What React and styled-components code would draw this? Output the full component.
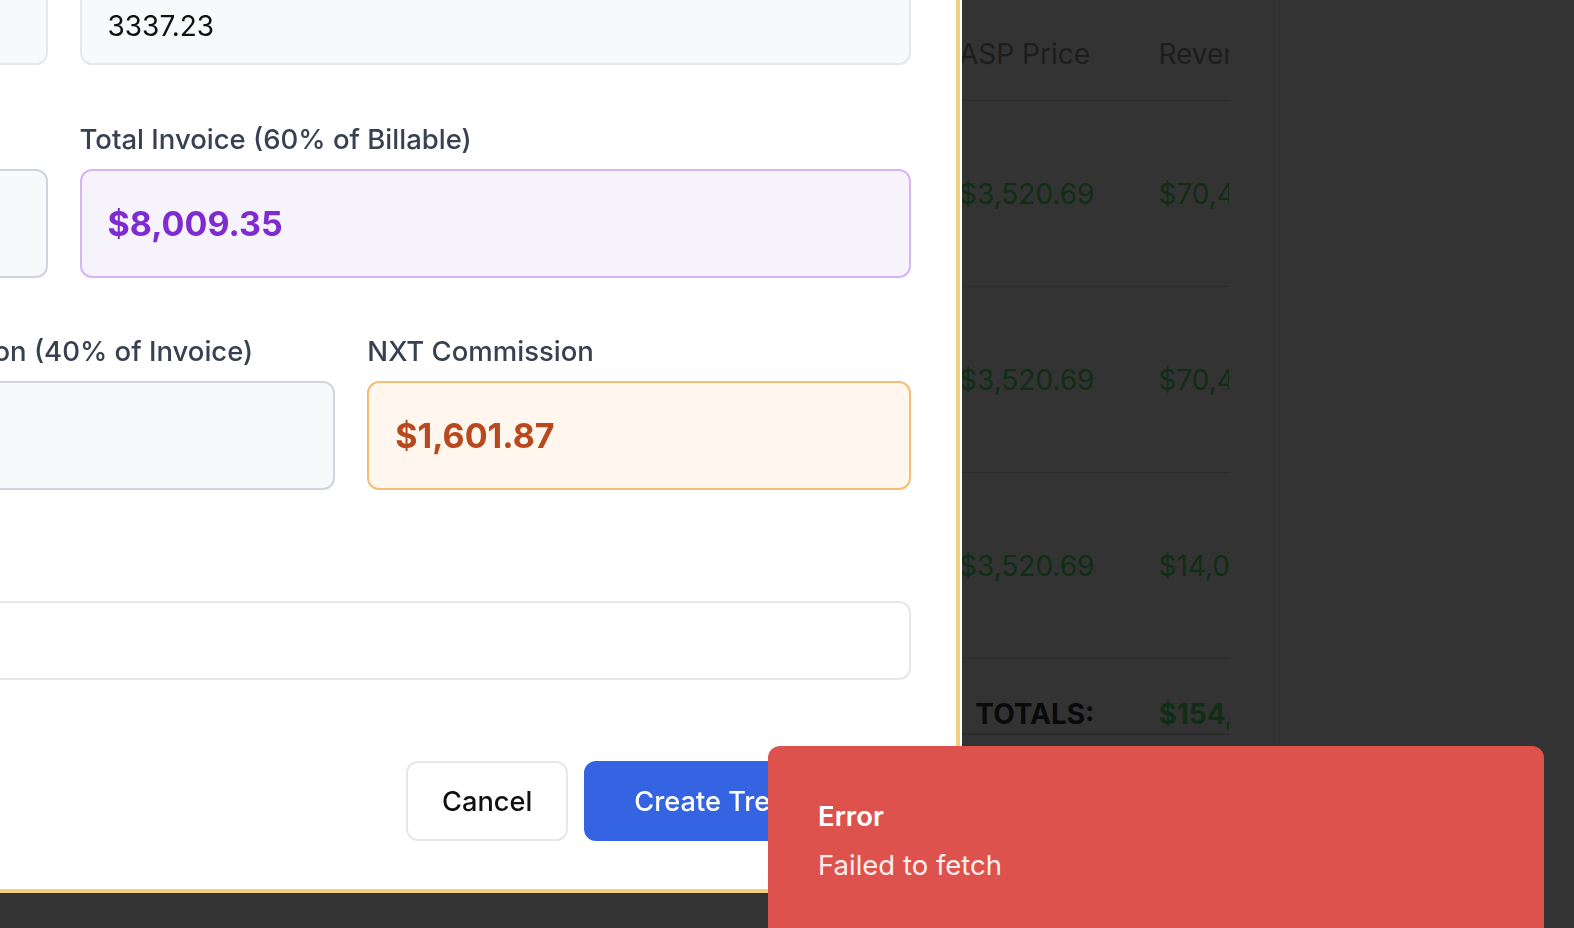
import React from "react";
import styled, { createGlobalStyle } from "styled-components";

const GlobalStyle = createGlobalStyle`
  html, body {
    margin: 0;
    padding: 0;
    background: #333333;
    overflow: hidden;
  }
  body {
    font-family: Inter, "Noto Sans", "Liberation Sans", sans-serif;
  }
`;

const Page = styled.div`
  width: 1574px;
  height: 928px;
  display: grid;
  grid-template-columns: 1280px 1fr;
  background: #333333;
`;

const MainArea = styled.div`
  border-right: 1px solid #2e2e2e;
  padding-right: 50px;
`;

const TableClip = styled.div`
  width: 1229px;
  overflow: hidden;
`;

const Table = styled.table`
  border-collapse: collapse;
  font-size: 28px;
  white-space: nowrap;
`;

const HeadCell = styled.th`
  height: 92px;
  padding: 8px ${(p) => p.$pr || "66px"} 0 0;
  text-align: left;
  font-weight: 400;
  color: #1d1d1d;
  border-bottom: 1px solid #2c2c2c;
  width: ${(p) => p.$w || "auto"};
  min-width: ${(p) => p.$w || "auto"};
`;

const Cell = styled.td`
  height: 185px;
  padding: 0 ${(p) => p.$pr || "66px"} 0 0;
  text-align: left;
  color: ${(p) => (p.$money ? "#0f2e14" : "#1d1d1d")};
  border-bottom: 1px solid #2c2c2c;
`;

const TotalCell = styled.td`
  height: 38px;
  padding: 36px ${(p) => p.$pr || "66px"} 0 0;
  text-align: ${(p) => (p.$right ? "right" : "left")};
  font-weight: 700;
  color: ${(p) => (p.$money ? "#0f2e14" : "#0a0a0a")};
  border-bottom: 2px solid #2c2c2c;
`;

// ---- modal ----

const Modal = styled.div`
  position: fixed;
  left: -832px;
  top: -207px;
  width: 1792px;
  height: 1100px;
  box-sizing: border-box;
  background: #ffffff;
  border-right: 4px solid #f0cf82;
  border-bottom: 4px solid #f0cf82;
  box-shadow: 2px 0 0 #ffffff;
  padding: 0 45px 48px 48px;
  display: flex;
  flex-direction: column;
  justify-content: flex-end;
`;

const Form = styled.div`
  display: flex;
  flex-direction: column;
  gap: 56px;
`;

const Grid = styled.div`
  display: grid;
  grid-template-columns: repeat(${(p) => p.$cols}, 1fr);
  column-gap: 32px;
  margin-bottom: ${(p) => p.$tight || "0"};
`;

const Field = styled.div`
  display: flex;
  flex-direction: column;
  gap: 12px;
  margin-top: ${(p) => p.$extra || "0"};
`;

const Label = styled.label`
  font-size: 27.5px;
  line-height: 36px;
  font-weight: 500;
  color: #374151;
`;

const Input = styled.div`
  height: 79px;
  box-sizing: border-box;
  border: 2px solid #e5e7eb;
  border-radius: 12px;
  background: ${(p) => (p.$white ? "#ffffff" : "#f8f9fa")};
  padding: 0 26px;
  display: flex;
  align-items: center;
  font-size: 28px;
  color: #111111;
`;

const tones = {
  gray: { bg: "#f8f9fa", border: "#d1d5db", color: "#374151" },
  purple: { bg: "#f7f3fc", border: "#d4b5f8", color: "#7e2bd0" },
  orange: { bg: "#fff6ed", border: "#f6bc78", color: "#b8491f" },
};

const ValueBox = styled.div`
  height: 109px;
  box-sizing: border-box;
  border: 2px solid ${(p) => tones[p.$tone].border};
  border-radius: 12px;
  background: ${(p) => tones[p.$tone].bg};
  color: ${(p) => tones[p.$tone].color};
  padding: 0 26px;
  display: flex;
  align-items: center;
  font-size: 34px;
  font-weight: 700;
`;

const Actions = styled.div`
  display: flex;
  justify-content: flex-end;
  gap: 16px;
  margin-top: 81px;
`;

const Button = styled.button`
  height: 80px;
  padding: 0 ${(p) => (p.$primary ? "48px" : "34px")};
  border-radius: 12px;
  border: 2px solid ${(p) => (p.$primary ? "#3564e3" : "#e5e7eb")};
  background: ${(p) => (p.$primary ? "#3564e3" : "#ffffff")};
  color: ${(p) => (p.$primary ? "#ffffff" : "#111111")};
  font-family: inherit;
  font-size: 27.2px;
  font-weight: 500;
  cursor: pointer;
`;

// ---- toast ----

const Toast = styled.div`
  position: fixed;
  left: 768px;
  top: 746px;
  width: 776px;
  height: 230px;
  box-sizing: border-box;
  background: #de524d;
  border-radius: 12px;
  padding: 52px 50px;
  display: flex;
  flex-direction: column;
  gap: 13px;
  color: #ffffff;
`;

const ToastTitle = styled.div`
  font-size: 27.5px;
  line-height: 36px;
  font-weight: 600;
`;

const ToastText = styled.div`
  font-size: 27.5px;
  line-height: 36px;
  color: #fdeeed;
`;

const rows = [
  { product: "Product A", units: "20", asp: "$3,520.69", revenue: "$70,413.80" },
  { product: "Product B", units: "20", asp: "$3,520.69", revenue: "$70,413.80" },
  { product: "Product C", units: "4", asp: "$3,520.69", revenue: "$14,082.76" },
];

export default function App() {
  return (
    <>
      <GlobalStyle />
      <Page>
        <MainArea>
          <TableClip>
            <Table>
              <thead>
                <tr>
                  <HeadCell $w="503px">Product</HeadCell>
                  <HeadCell $w="324px">Units</HeadCell>
                  <HeadCell $w="135px" $pr="64px">ASP Price</HeadCell>
                  <HeadCell>Revenue</HeadCell>
                </tr>
              </thead>
              <tbody>
                {rows.map((r) => (
                  <tr key={r.product}>
                    <Cell>{r.product}</Cell>
                    <Cell>{r.units}</Cell>
                    <Cell $money $pr="64px">{r.asp}</Cell>
                    <Cell $money>{r.revenue}</Cell>
                  </tr>
                ))}
                <tr>
                  <TotalCell />
                  <TotalCell />
                  <TotalCell $right $pr="64px">TOTALS:</TotalCell>
                  <TotalCell $money>$154,910.36</TotalCell>
                </tr>
              </tbody>
            </Table>
          </TableClip>
        </MainArea>
        <div />
      </Page>

      <Modal>
        <Form>
          <Grid $cols={2}>
            <Field>
              <Label>Units Billed</Label>
              <Input>44</Input>
            </Field>
            <Field>
              <Label>Unit Price</Label>
              <Input>3337.23</Input>
            </Field>
          </Grid>
          <Grid $cols={2} $tight="-1px">
            <Field>
              <Label>Total Billable</Label>
              <ValueBox $tone="gray">$13,348.92</ValueBox>
            </Field>
            <Field>
              <Label>Total Invoice (60% of Billable)</Label>
              <ValueBox $tone="purple">$8,009.35</ValueBox>
            </Field>
          </Grid>
          <Grid $cols={3}>
            <Field>
              <Label>Sales Rep</Label>
              <ValueBox $tone="gray">Unassigned</ValueBox>
            </Field>
            <Field>
              <Label>Reps Commission (40% of Invoice)</Label>
              <ValueBox $tone="gray">$3,203.74</ValueBox>
            </Field>
            <Field>
              <Label>NXT Commission</Label>
              <ValueBox $tone="orange">$1,601.87</ValueBox>
            </Field>
          </Grid>
          <Field $extra="7px">
            <Label>Notes</Label>
            <Input $white />
          </Field>
        </Form>
        <Actions>
          <Button>Cancel</Button>
          <Button $primary>Create Treatment</Button>
        </Actions>
      </Modal>

      <Toast>
        <ToastTitle>Error</ToastTitle>
        <ToastText>Failed to fetch</ToastText>
      </Toast>
    </>
  );
}
